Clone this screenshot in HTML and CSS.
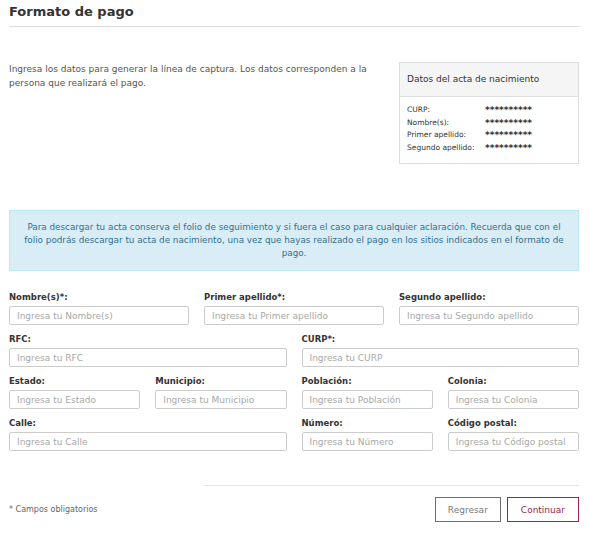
FILE: index.html
```html
<!DOCTYPE html>
<html lang="es">
<head>
    <meta charset="UTF-8">
    <meta name="viewport" content="width=device-width, initial-scale=1.0">
    <title>Formato de pago</title>
    <link rel="stylesheet" href="styles.css">
</head>
<body>
    <div class="page">
        <h2 class="title">Formato de pago</h2>
        <hr class="red">

        <div class="intro">
            <p class="intro-text">Ingresa los datos para generar la línea de captura. Los datos corresponden a la persona que realizará el pago.</p>
            <div class="panel">
                <div class="panel-heading">Datos del acta de nacimiento</div>
                <div class="panel-body">
                    <div class="data-row"><span class="data-label">CURP:</span><span class="data-value">**********</span></div>
                    <div class="data-row"><span class="data-label">Nombre(s):</span><span class="data-value">**********</span></div>
                    <div class="data-row"><span class="data-label">Primer apellido:</span><span class="data-value">**********</span></div>
                    <div class="data-row"><span class="data-label">Segundo apellido:</span><span class="data-value">**********</span></div>
                </div>
            </div>
        </div>

        <div class="alert">Para descargar tu acta conserva el folio de seguimiento y si fuera el caso para cualquier aclaración. Recuerda que con el folio podrás descargar tu acta de nacimiento, una vez que hayas realizado el pago en los sitios indicados en el formato de pago.</div>

        <form class="form">
            <div class="row cols-3">
                <div class="field">
                    <label for="nombre">Nombre(s)*:</label>
                    <input type="text" id="nombre" placeholder="Ingresa tu Nombre(s)">
                </div>
                <div class="field">
                    <label for="primer">Primer apellido*:</label>
                    <input type="text" id="primer" placeholder="Ingresa tu Primer apellido">
                </div>
                <div class="field">
                    <label for="segundo">Segundo apellido:</label>
                    <input type="text" id="segundo" placeholder="Ingresa tu Segundo apellido">
                </div>
            </div>
            <div class="row cols-4">
                <div class="field span-2">
                    <label for="rfc">RFC:</label>
                    <input type="text" id="rfc" placeholder="Ingresa tu RFC">
                </div>
                <div class="field span-2">
                    <label for="curp">CURP*:</label>
                    <input type="text" id="curp" placeholder="Ingresa tu CURP">
                </div>
            </div>
            <div class="row cols-4">
                <div class="field">
                    <label for="estado">Estado:</label>
                    <input type="text" id="estado" placeholder="Ingresa tu Estado">
                </div>
                <div class="field">
                    <label for="municipio">Municipio:</label>
                    <input type="text" id="municipio" placeholder="Ingresa tu Municipio">
                </div>
                <div class="field">
                    <label for="poblacion">Población:</label>
                    <input type="text" id="poblacion" placeholder="Ingresa tu Población">
                </div>
                <div class="field">
                    <label for="colonia">Colonia:</label>
                    <input type="text" id="colonia" placeholder="Ingresa tu Colonia">
                </div>
            </div>
            <div class="row cols-4">
                <div class="field span-2">
                    <label for="calle">Calle:</label>
                    <input type="text" id="calle" placeholder="Ingresa tu Calle">
                </div>
                <div class="field">
                    <label for="numero">Número:</label>
                    <input type="text" id="numero" placeholder="Ingresa tu Número">
                </div>
                <div class="field">
                    <label for="cp">Código postal:</label>
                    <input type="text" id="cp" placeholder="Ingresa tu Código postal">
                </div>
            </div>

            <div class="footer">
                <hr class="footer-line">
                <div class="footer-bar">
                    <p class="required-note">* Campos obligatorios</p>
                    <div class="buttons">
                        <button type="button" class="btn">Regresar</button>
                        <button type="submit" class="btn btn-primary">Continuar</button>
                    </div>
                </div>
            </div>
        </form>
    </div>
</body>
</html>
```

FILE: styles.css
```css
body {
    margin: 0;
    font-family: "DejaVu Sans", sans-serif;
    color: #545454;
    background: #fff;
}
.page {
    width: 570px;
    margin-left: 9px;
}
.title {
    margin: 0;
    padding-top: 3px;
    font-size: 13px;
    font-weight: bold;
    color: #333;
    line-height: 18px;
}
.red {
    position: relative;
    margin: 5px 0 0;
    border: 0;
    border-top: 1px solid #dcdcdc;
    height: 0;
}
.red::after {
    content: "";
    position: absolute;
    left: 0;
    top: 0;
    width: 17px;
    height: 3px;
    background: #b38e5d;
}
.intro {
    display: flex;
    justify-content: space-between;
    align-items: flex-start;
    margin-top: 35px;
}
.intro-text {
    width: 358px;
    margin: 0;
    padding-top: 0;
    font-size: 9px;
    line-height: 14px;
}
.panel {
    width: 178px;
    border: 1px solid #ddd;
    margin-top: 0;
}
.panel-heading {
    height: 33px;
    line-height: 33px;
    padding-left: 7px;
    background: #f5f5f5;
    border-bottom: 1px solid #ddd;
    font-size: 9px;
    color: #333;
}
.panel-body {
    padding: 7px 7px 9px;
}
.data-row {
    display: flex;
    font-size: 7.5px;
    line-height: 12.5px;
    color: #333;
}
.data-label {
    width: 78px;
}
.data-value {
    font-size: 9px;
    font-weight: bold;
}
.alert {
    margin-top: 46px;
    padding: 10px 10px;
    background: #d9edf7;
    border: 1px solid #bce8f1;
    color: #31708f;
    font-size: 8.8px;
    line-height: 13px;
    text-align: center;
}
.form {
    margin-top: 20px;
}
.row {
    display: grid;
    column-gap: 15px;
    margin-bottom: 8px;
}
.cols-3 {
    grid-template-columns: repeat(3, 1fr);
}
.cols-4 {
    grid-template-columns: repeat(4, 1fr);
}
.span-2 {
    grid-column: span 2;
}
.field label {
    display: block;
    font-size: 8.5px;
    font-weight: bold;
    color: #333;
    line-height: 12px;
    margin-bottom: 3px;
}
.field input {
    display: block;
    box-sizing: border-box;
    width: 100%;
    height: 19px;
    margin: 0;
    padding: 0 7px;
    border: 1px solid #ccc;
    border-radius: 2px;
    font-family: inherit;
    font-size: 9px;
}
.field input::placeholder {
    color: #a8a8a8;
}
.footer {
    margin-top: 34px;
}
.footer-line {
    margin: 0 0 0 195px;
    border: 0;
    border-top: 1px solid #e5e5e5;
}
.footer-bar {
    display: flex;
    justify-content: space-between;
    align-items: center;
    margin-top: 11px;
}
.required-note {
    margin: 0;
    font-size: 8px;
    color: #666;
}
.buttons {
    display: flex;
    gap: 6px;
}
.btn {
    height: 25px;
    padding: 0 12px;
    background: #fff;
    border: 1px solid #6f6f6f;
    border-radius: 0;
    font-family: inherit;
    font-size: 9px;
    color: #7a7a7a;
}
.btn-primary {
    padding: 0 13px;
    border-color: #9d2449;
    color: #9d2449;
}
```
